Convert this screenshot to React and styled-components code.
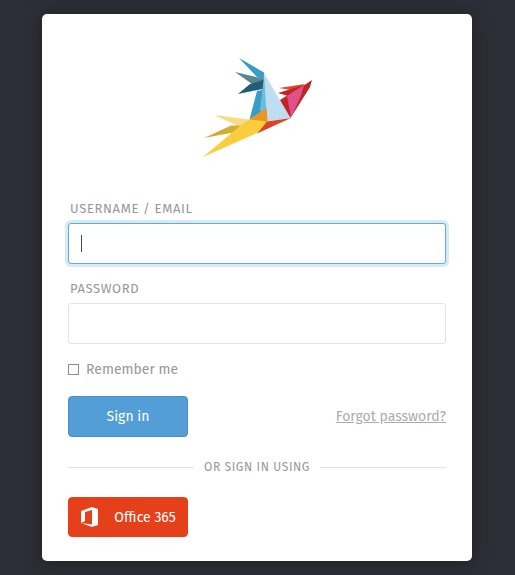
import React from "react";
import styled, { createGlobalStyle } from "styled-components";

const GlobalStyle = createGlobalStyle`
  *, *::before, *::after { box-sizing: border-box; }
  body {
    margin: 0;
    background: #2e2e38;
    font-family: "Fira Sans", "Noto Sans", sans-serif;
    font-size: 14px;
    color: #979797;
  }
  button, input { font: inherit; }
`;

const Page = styled.main`
  min-height: 100vh;
  padding: 14px 43px 14px 42px;
`;

const Card = styled.form`
  display: flex;
  flex-direction: column;
  max-width: 430px;
  margin: 0 auto;
  padding: 42px 26px 24px;
  background: #fff;
  border-radius: 5px;
  box-shadow: 0 2px 20px rgba(20, 24, 24, 0.6);
`;

const Logo = styled.svg`
  display: block;
  width: 112px;
  height: 104px;
  margin: 0 auto 40px;
`;

const Field = styled.div`
  display: flex;
  flex-direction: column;
  margin-bottom: 16px;
`;

const Label = styled.label`
  padding: 0 2px;
  margin-bottom: 5px;
  font-size: 13px;
  line-height: 18px;
  letter-spacing: 0.05em;
  text-transform: uppercase;
`;

const Control = styled.div`
  position: relative;
  display: flex;

  &:focus-within::after {
    content: "";
    position: absolute;
    left: 13px;
    top: 12px;
    width: 1px;
    height: 17px;
    background: ${({ $empty }) => ($empty ? "#444" : "transparent")};
  }
`;

const TextInput = styled.input`
  width: 100%;
  height: 41px;
  padding: 0 12px;
  color: #444;
  caret-color: ${({ value }) => (value === "" ? "transparent" : "#444")};
  background: #fff;
  border: 1px solid #e3e3e3;
  border-radius: 3px;
  outline: none;

  &:focus {
    border-color: #5dade0;
    box-shadow: 0 0 0 3px #d7eaf6;
  }
`;

const Remember = styled.label`
  display: flex;
  align-items: center;
  align-self: flex-start;
  gap: 7px;
  line-height: 20px;
  margin-bottom: 16px;
`;

const Checkbox = styled.input`
  appearance: none;
  width: 11px;
  height: 11px;
  margin: 0 0 2px;
  border: 1px solid #8c8c8c;
  background: #fff;

  &:checked { background: #539ed6; }
`;

const Actions = styled.div`
  display: flex;
  align-items: center;
  justify-content: space-between;
`;

const Button = styled.button`
  display: flex;
  align-items: center;
  justify-content: center;
  gap: 16px;
  width: 120px;
  height: ${({ $office }) => ($office ? "40px" : "41px")};
  padding: 0;
  color: #fff;
  white-space: nowrap;
  background: ${({ $office }) => ($office ? "#e6401b" : "#539ed6")};
  border: 1px solid ${({ $office }) => ($office ? "#e6401b" : "#468fc4")};
  border-radius: 4px;
  cursor: pointer;
`;

const ForgotLink = styled.a`
  color: #acacac;
  text-decoration: underline;
`;

const Divider = styled.div`
  display: flex;
  align-items: center;
  gap: 10px;
  margin: 21px 0;
  font-size: 12px;
  line-height: 18px;
  letter-spacing: 0.05em;
  text-transform: uppercase;

  &::before, &::after {
    content: "";
    flex: 1;
    height: 1px;
    background: #e3e3e3;
  }
`;

const OfficeMark = styled.svg`
  flex: none;
  width: 18px;
  height: 20px;
`;

function BirdLogo() {
  return (
    <Logo viewBox="201 56 112 104" role="img" aria-label="Bird">
      <path fill="#389dc7" d="M239 58 264 72.500 264 80 257 77Z" />
      <path fill="#389dc7" d="M264 72 262 90 257 91 249.500 119.500 266 109Z" />
      <path fill="#72bbda" d="M264 73 260 111 268 114Z" />
      <path fill="#5b858f" d="M235 72 264 79 262 83 252 84Z" />
      <path fill="#205f77" d="M238 94 250 84 263.500 80 262.500 89Z" />
      <path fill="#bddff1" d="M264 73 290.500 118 267 121.500Z" />
      <path fill="#f6dc86" d="M214 115 250 119.500 240 127Z" />
      <path fill="#d1ae32" d="M204 138 231 125.500 241 125.500 236 132Z" />
      <path fill="#facd3d" d="M203 157 240 126 250 119 268 121 257 133Z" />
      <path fill="#ef951e" d="M249.500 119.500 266.500 108 267.500 121.500Z" />
      <path fill="#df4422" d="M267 121.500 291 118 257 133.500Z" />
      <path fill="#dd482b" d="M279 88 305 84 297 91Z" />
      <path fill="#bf2526" d="M278 93 304 85 288 96Z" />
      <path fill="#bf2526" d="M280 100 288 95 293 108 290.500 118Z" />
      <path fill="#bf2526" d="M303 86 312 80 310 87 290.500 118Z" />
      <path fill="#df5189" d="M287 96 304 85 301 96 291 117Z" />
    </Logo>
  );
}

export default function App() {
  const [username, setUsername] = React.useState("");
  return (
    <>
      <GlobalStyle />
      <Page>
        <Card onSubmit={(event) => event.preventDefault()}>
          <BirdLogo />
          <Field>
            <Label htmlFor="username">Username / Email</Label>
            <Control $empty={!username}>
              <TextInput
                id="username"
                type="text"
                autoFocus
                value={username}
                onChange={(event) => setUsername(event.target.value)}
              />
            </Control>
          </Field>
          <Field>
            <Label htmlFor="password">Password</Label>
            <TextInput id="password" type="password" />
          </Field>
          <Remember>
            <Checkbox type="checkbox" />
            Remember me
          </Remember>
          <Actions>
            <Button type="submit">Sign in</Button>
            <ForgotLink href="#forgot">Forgot password?</ForgotLink>
          </Actions>
          <Divider>Or sign in using</Divider>
          <Button type="button" $office>
            <OfficeMark viewBox="0 0 18 20" aria-hidden="true">
              <path
                fill="#fff"
                fillRule="evenodd"
                d="M1 4 12 0 18 2V18L12 20 1 16 12 17.500V3L5 5V14L1 16Z"
              />
            </OfficeMark>
            Office 365
          </Button>
        </Card>
      </Page>
    </>
  );
}
